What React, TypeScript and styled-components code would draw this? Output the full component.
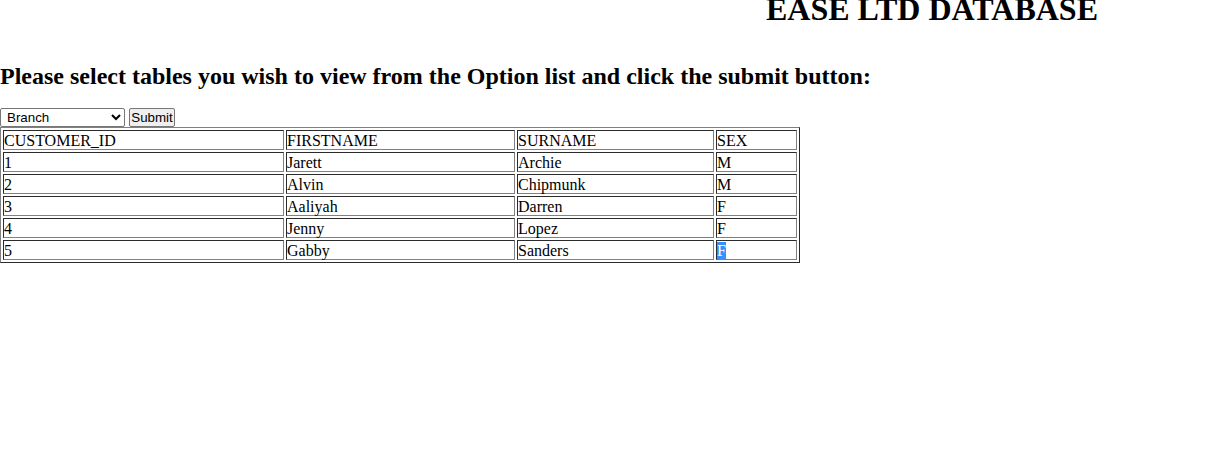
import React from "react";
import styled, { createGlobalStyle } from "styled-components";

const Global = createGlobalStyle`
  html, body { margin: 0; padding: 0; background: #fff; }
  body { font-family: "Liberation Serif", "Times New Roman", serif; font-size: 16px; color: #000; }
`;

const Page = styled.div`
  display: flex;
  flex-direction: column;
  align-items: flex-start;
`;

const Title = styled.h1`
  align-self: stretch;
  margin: -9px 0 0 0;
  padding-left: 647px;
  text-align: center;
  font-size: 32px;
  font-weight: bold;
  line-height: 37px;
`;

const Prompt = styled.h2`
  margin: 34px 0 0 0;
  font-size: 24px;
  font-weight: bold;
  line-height: 28px;
`;

const Form = styled.form`
  margin: 18px 0 0 0;
  display: flex;
  align-items: center;
  gap: 4px;
  height: 19px;
`;

const Select = styled.select`
  width: 125px;
  height: 19px;
  font-family: Arial, "Liberation Sans", sans-serif;
  font-size: 13.33px;
  padding: 0 0 0 2px;
  margin: 0;
  border: 1px solid #767676;
  border-radius: 2px;
  background: #fff;
  color: #000;
`;

const Button = styled.button`
  width: 46px;
  height: 19px;
  padding: 0;
  margin: 0;
  font-family: Arial, "Liberation Sans", sans-serif;
  font-size: 13.33px;
  border: 1px solid #767676;
  border-radius: 2px;
  background: #efefef;
  color: #000;
`;

const Table = styled.table`
  width: 800px;
  margin-top: 0;
  border: 1px solid;
  border-color: #808080 #2b2b2b #2b2b2b #808080;
  border-collapse: separate;
  border-spacing: 2px;
  table-layout: fixed;
  font-family: "Liberation Serif", "Times New Roman", serif;
  font-size: 16px;
`;

const Cell = styled.td<{ $w?: number }>`
  ${(p) => (p.$w ? `width: ${p.$w}px;` : "")}
  box-sizing: border-box;
  border: 1px solid;
  border-color: #2b2b2b #808080 #808080 #2b2b2b;
  padding: 2px 0 0 0;
  height: 20px;
  line-height: 16px;
  text-align: left;
  vertical-align: top;
  font-weight: normal;
  white-space: nowrap;
`;

const Highlight = styled.span`
  background: #3390ff;
  color: #fff;
`;

const widths = [281, 229, 197, 81];
const header = ["CUSTOMER_ID", "FIRSTNAME", "SURNAME", "SEX"];
const rows = [
  ["1", "Jarett", "Archie", "M"],
  ["2", "Alvin", "Chipmunk", "M"],
  ["3", "Aaliyah", "Darren", "F"],
  ["4", "Jenny", "Lopez", "F"],
  ["5", "Gabby", "Sanders", "F"],
];

export default function App() {
  return (
    <Page>
      <Global />
      <Title>EASE LTD DATABASE</Title>
      <Prompt>Please select tables you wish to view from the Option list and click the submit button:</Prompt>
      <Form onSubmit={(e) => e.preventDefault()}>
        <Select defaultValue="Branch">
          <option>Branch</option>
          <option>Customer</option>
          <option>Staff</option>
        </Select>
        <Button type="submit">Submit</Button>
      </Form>
      <Table>
        <tbody>
          <tr>
            {header.map((h, i) => (
              <Cell key={h} $w={widths[i]}>{h}</Cell>
            ))}
          </tr>
          {rows.map((r, ri) => (
            <tr key={ri}>
              {r.map((c, ci) => (
                <Cell key={ci}>
                  {ri === rows.length - 1 && ci === 3 ? <Highlight>{c}</Highlight> : c}
                </Cell>
              ))}
            </tr>
          ))}
        </tbody>
      </Table>
    </Page>
  );
}
